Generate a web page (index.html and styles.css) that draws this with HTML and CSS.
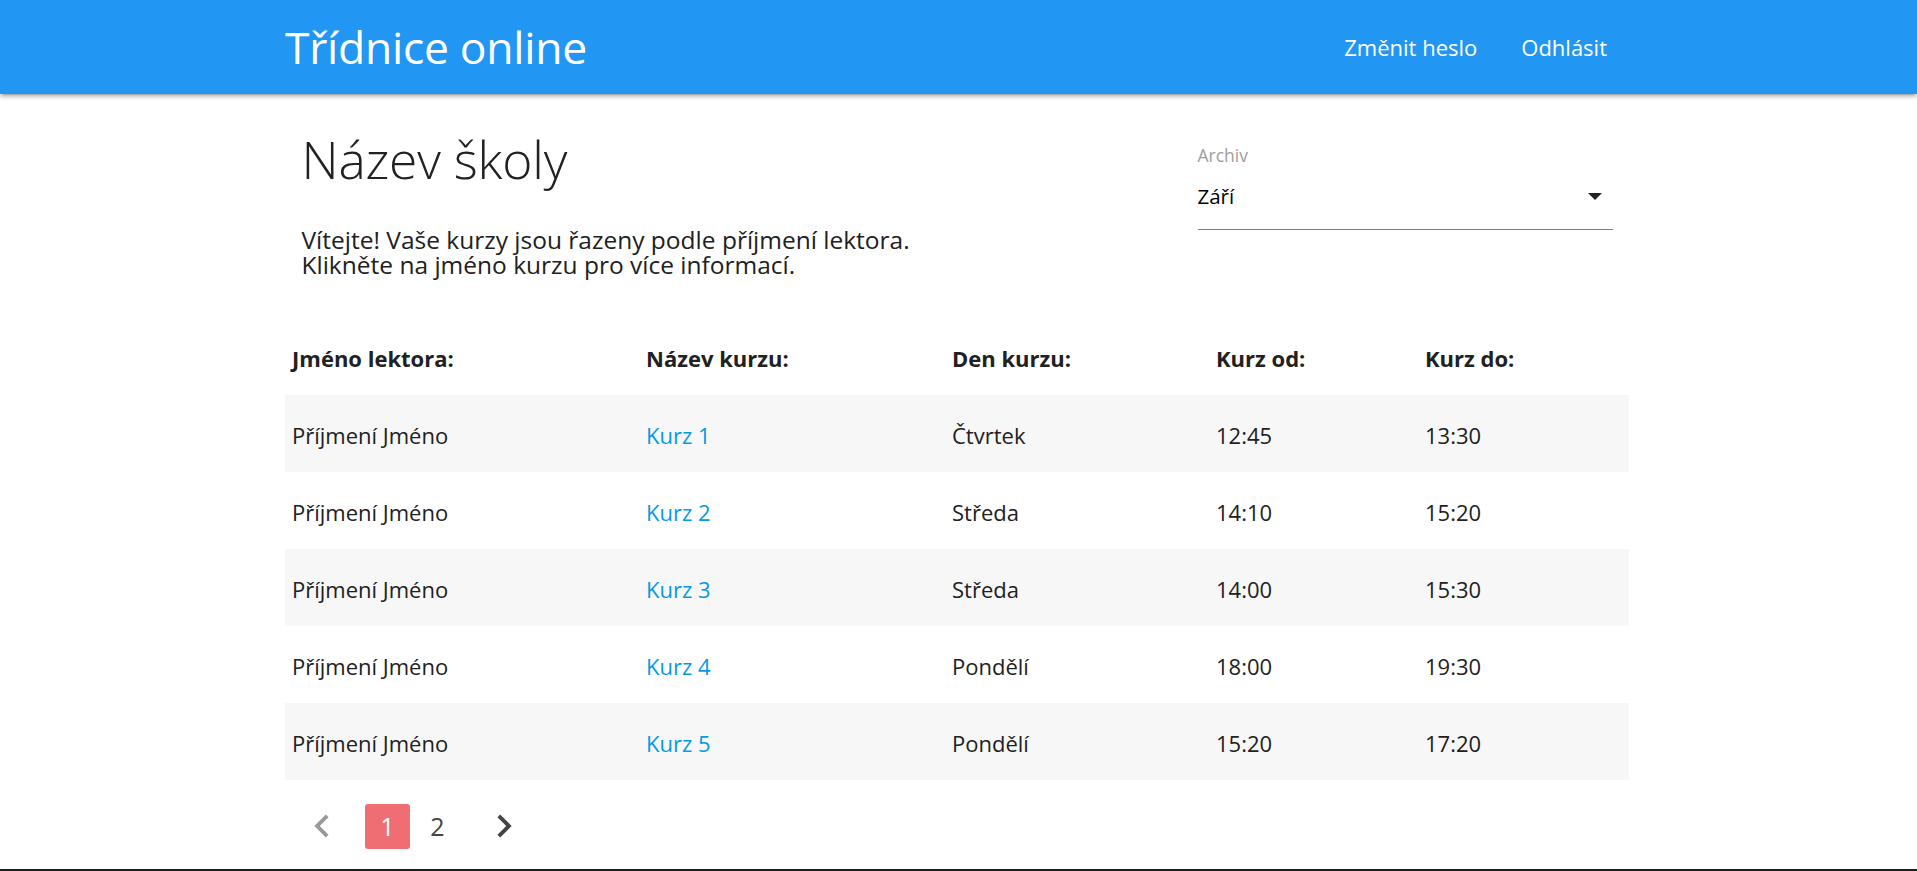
FILE: index.html
```html
<!DOCTYPE html>
<html lang="cs">
<head>
<meta charset="utf-8">
<title>Třídnice online</title>
<link rel="stylesheet" href="styles.css">
</head>
<body>
<header class="navbar">
  <div class="container nav-inner">
    <a class="brand" href="#">Třídnice online</a>
    <ul class="nav-links">
      <li><a href="#">Změnit heslo</a></li>
      <li><a href="#">Odhlásit</a></li>
    </ul>
  </div>
</header>

<main class="container">
  <section class="top">
    <div class="intro">
      <h1 class="school">Název školy</h1>
      <p class="welcome"><span class="line">Vítejte! Vaše kurzy jsou řazeny podle příjmení lektora.</span><span class="line">Klikněte na jméno kurzu pro více informací.</span></p>
    </div>
    <div class="archive">
      <label class="archive-label">Archiv</label>
      <div class="select">
        <span class="select-value">Září</span>
        <svg class="caret" width="14" height="7" viewBox="0 0 14 7"><path d="M0 0h14L7 7z" fill="#222"/></svg>
      </div>
    </div>
  </section>

  <table class="courses">
    <colgroup>
      <col class="c1"><col class="c2"><col class="c3"><col class="c4"><col class="c5">
    </colgroup>
    <thead>
      <tr><th>Jméno lektora:</th><th>Název kurzu:</th><th>Den kurzu:</th><th>Kurz od:</th><th>Kurz do:</th></tr>
    </thead>
    <tbody>
      <tr><td>Příjmení Jméno</td><td><a href="#">Kurz 1</a></td><td>Čtvrtek</td><td>12:45</td><td>13:30</td></tr>
      <tr><td>Příjmení Jméno</td><td><a href="#">Kurz 2</a></td><td>Středa</td><td>14:10</td><td>15:20</td></tr>
      <tr><td>Příjmení Jméno</td><td><a href="#">Kurz 3</a></td><td>Středa</td><td>14:00</td><td>15:30</td></tr>
      <tr><td>Příjmení Jméno</td><td><a href="#">Kurz 4</a></td><td>Pondělí</td><td>18:00</td><td>19:30</td></tr>
      <tr><td>Příjmení Jméno</td><td><a href="#">Kurz 5</a></td><td>Pondělí</td><td>15:20</td><td>17:20</td></tr>
    </tbody>
  </table>

  <nav class="pagination">
    <svg class="chev prev" width="46" height="46" viewBox="0 0 24 24"><path d="M15.41 7.41L14 6l-6 6 6 6 1.41-1.41L10.83 12z" fill="#999"/></svg>
    <a class="page active" href="#">1</a>
    <a class="page" href="#">2</a>
    <svg class="chev next" width="46" height="46" viewBox="0 0 24 24"><path d="M10 6L8.59 7.41 13.17 12l-4.58 4.59L10 18l6-6z" fill="#444"/></svg>
  </nav>
</main>
<div class="screen-edge"></div>
</body>
</html>
```

FILE: styles.css
```css
* { box-sizing: border-box; }
html, body { margin: 0; padding: 0; }
body {
  font-family: "Open Sans", "Noto Sans", sans-serif;
  color: #212121;
  background: #fff;
  overflow: hidden;
}
a { text-decoration: none; }

.container {
  width: 1344px;
  margin-left: calc(50% - 673.5px);
}

.navbar {
  height: 94px;
  background: #2196f3;
  box-shadow: 0 3px 3px 0 rgba(0,0,0,.14), 0 4px 1px -3px rgba(0,0,0,.12), 0 1px 7px 0 rgba(0,0,0,.2);
  position: relative;
  z-index: 1;
}
.nav-inner {
  height: 94px;
  display: flex;
  align-items: center;
  justify-content: space-between;
}
.brand {
  color: #fff;
  font-size: 44.5px;
  line-height: 94px;
  letter-spacing: -0.3px;
}
.nav-links {
  list-style: none;
  margin: 0;
  padding: 0;
  display: flex;
}
.nav-links a {
  display: block;
  color: #fff;
  font-size: 22px;
  line-height: 94px;
  padding: 0 22px;
}

.top {
  display: grid;
  grid-template-columns: 2fr 1fr;
  padding-top: 30px;
}
.intro, .archive { padding: 0 16.5px; }
.school {
  margin: 0;
  font-size: 51.5px;
  font-weight: 300;
  line-height: 70px;
  letter-spacing: -0.2px;
  color: #212121;
}
.welcome {
  margin: 33px 0 0;
  font-size: 24.5px;
  line-height: 25px;
}
.welcome .line {
  display: block;
  height: 25px;
}
.archive-label {
  display: block;
  margin-top: 21px;
  font-size: 17.5px;
  line-height: 20px;
  color: #9e9e9e;
}
.select {
  margin-top: 14px;
  display: flex;
  align-items: flex-start;
  justify-content: space-between;
  height: 51px;
  padding-bottom: 16px;
  border-bottom: 1px solid #26a69a;
}
.select-value {
  font-size: 20.5px;
  line-height: 34px;
  color: #000;
}
.caret { margin: 14px 11px 0 0; }

.courses {
  width: 100%;
  margin-top: 41px;
  border-collapse: collapse;
  table-layout: fixed;
}
.c1 { width: 354px; }
.c2 { width: 306px; }
.c3 { width: 264px; }
.c4 { width: 209px; }
.c5 { width: auto; }
.courses th, .courses td {
  height: 77px;
  padding: 2px 7px 0;
  text-align: left;
  vertical-align: middle;
  font-size: 22px;
  line-height: 30px;
}
.courses th { font-weight: 700; color: #212121; }
.courses tbody tr:nth-child(odd) { background: #f7f7f7; }
.courses td a { color: #039be5; }

.pagination {
  display: flex;
  align-items: center;
  margin-top: 23px;
  padding-left: 14px;
}
.chev { display: block; }
.chev.prev { margin-right: 20px; }
.chev.next { margin-left: 21px; }
.page {
  width: 45px;
  height: 45px;
  border-radius: 3px;
  display: flex;
  align-items: center;
  justify-content: center;
  font-size: 25px;
  color: #444;
}
.page + .page { margin-left: 5px; }
.page.active {
  background: #ee6e73;
  color: #fff;
}

.screen-edge {
  position: fixed;
  left: 0;
  right: 0;
  bottom: 0;
  height: 2px;
  background: #1e1e1e;
}
```
